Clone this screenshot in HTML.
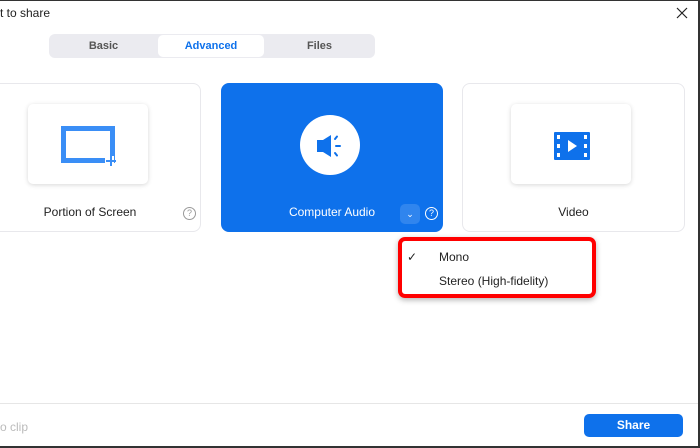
<!DOCTYPE html>
<html><head><style>
*{margin:0;padding:0;box-sizing:border-box}
body{width:700px;height:448px;overflow:hidden;background:#fff;font-family:"Liberation Sans",sans-serif;position:relative;color:#222}
.a{position:absolute}
.card{position:absolute;top:83px;height:149px;border:1px solid #e8e8ec;border-radius:8px;background:#fff}
.inner{position:absolute;top:104px;width:120px;height:80px;background:#fff;border-radius:5px;box-shadow:0 1px 5px rgba(0,0,0,.16)}
.lbl{position:absolute;top:205px;font-size:12px;text-align:center}
.q{position:absolute;width:13px;height:13px;border:1px solid #999;border-radius:50%;font-size:9px;line-height:11px;text-align:center;color:#999}
</style></head><body>
<div class="a" style="left:0;top:0;width:700px;height:448px;border-top:1px solid #333;border-right:2px solid #333;border-bottom:2px solid #333"></div>
<div class="a" style="left:0;top:6px;font-size:12px">t to share</div>
<svg class="a" style="left:676px;top:7px" width="12" height="12"><path d="M1 1L11 11M11 1L1 11" stroke="#222" stroke-width="1.2"/></svg>
<div class="a" style="left:49px;top:34px;width:326px;height:24px;background:#ebebf0;border-radius:6px"></div>
<div class="a" style="left:158px;top:35px;width:106px;height:22px;background:#fff;border-radius:5px"></div>
<div class="a" style="left:49px;top:40px;width:109px;text-align:center;font-size:11px;font-weight:bold;color:#555">Basic</div>
<div class="a" style="left:158px;top:40px;width:106px;text-align:center;font-size:11px;font-weight:bold;color:#0e71eb">Advanced</div>
<div class="a" style="left:264px;top:40px;width:111px;text-align:center;font-size:11px;font-weight:bold;color:#555">Files</div>

<div class="card" style="left:-10px;width:211px"></div>
<div class="inner" style="left:28px"></div>
<div class="a" style="left:61px;top:126px;width:54px;height:37px;border:5px solid #3a8ef6"></div>
<div class="a" style="left:105px;top:156px;width:9px;height:9px;background:#fff"></div>
<div class="a" style="left:106px;top:160px;width:10px;height:1.5px;background:#3a8ef6"></div>
<div class="a" style="left:110px;top:156px;width:1.5px;height:10px;background:#3a8ef6"></div>
<div class="lbl" style="left:0;width:180px;color:#222">Portion of Screen</div>
<div class="q" style="left:183px;top:207px">?</div>

<div class="card" style="left:221px;width:222px;background:#0e71eb;border-color:#0e71eb"></div>
<div class="a" style="left:300px;top:115px;width:60px;height:60px;border-radius:50%;background:#fff"></div>
<svg class="a" style="left:316px;top:131px" width="30" height="30"><path d="M1 9h6l8-5v22l-8-5H1z" fill="#0e71eb"/><path d="M19 8l2-2.5M20 15h4M19 22l2 2.5" stroke="#0e71eb" stroke-width="2" stroke-linecap="round"/></svg>
<div class="lbl" style="left:221px;width:222px;color:#fff">Computer Audio</div>
<div class="a" style="left:400px;top:204px;width:20px;height:20px;border-radius:5px;background:#3085ee;color:#fff;font-size:9px;text-align:center;line-height:20px">⌄</div>
<div class="q" style="left:425px;top:207px;border-color:#fff;color:#fff">?</div>

<div class="card" style="left:462px;width:223px"></div>
<div class="inner" style="left:511px"></div>
<svg class="a" style="left:554px;top:132px" width="36" height="28"><rect width="36" height="28" rx="1" fill="#0e71eb"/><g fill="#fff"><rect x="3" y="3" width="3" height="4"/><rect x="3" y="12" width="3" height="4"/><rect x="3" y="21" width="3" height="4"/><rect x="30" y="3" width="3" height="4"/><rect x="30" y="12" width="3" height="4"/><rect x="30" y="21" width="3" height="4"/><path d="M14 8l9 6-9 6z"/></g></svg>
<div class="lbl" style="left:462px;width:223px">Video</div>

<div class="a" style="left:398px;top:237px;width:198px;height:61px;border:4px solid #f00;border-radius:7px;box-shadow:0 2px 6px rgba(0,0,0,.3)"></div>
<div class="a" style="left:407px;top:250px;font-size:12px">✓</div>
<div class="a" style="left:439px;top:250px;font-size:12px">Mono</div>
<div class="a" style="left:439px;top:274px;font-size:12px">Stereo (High-fidelity)</div>

<div class="a" style="left:0;top:403px;width:698px;height:1px;background:#e6e6e6"></div>
<div class="a" style="left:0;top:420px;font-size:12px;color:#bbb">o clip</div>
<div class="a" style="left:584px;top:414px;width:99px;height:23px;background:#0e71eb;border-radius:5px;color:#fff;font-size:12px;font-weight:bold;text-align:center;line-height:23px">Share</div>
</body></html>
